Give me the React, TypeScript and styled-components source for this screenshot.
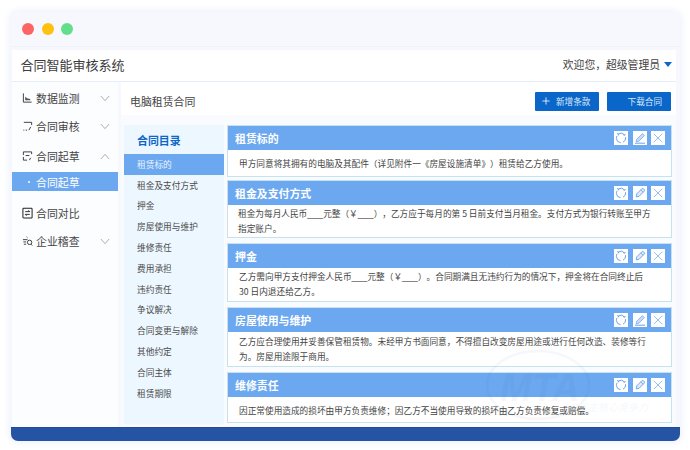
import React from 'react';
import styled, {createGlobalStyle} from 'styled-components';

const GlobalStyle = createGlobalStyle`
  html, body {
    margin: 0;
    padding: 0;
    background: #ffffff;
    font-family: "Noto Sans CJK SC", "Noto Sans", sans-serif;
    color: #444;
    text-spacing-trim: space-all;
  }
  * { box-sizing: border-box; }
`;

const tocItems = ['租赁标的', '租金及支付方式', '押金', '房屋使用与维护', '维修责任', '费用承担', '违约责任', '争议解决', '合同变更与解除', '其他约定', '合同主体', '租赁期限'];

const clauses = [
    {title: '租赁标的', lines: ['甲方同意将其拥有的电脑及其配件（详见附件一《房屋设施清单》）租赁给乙方使用。'], height: 52, gap: 3, inset: 11, pad: 6, pen: 'line'},
    {title: '租金及支付方式', lines: ['租金为每月人民币___元整（￥___），乙方应于每月的第 5 日前支付当月租金。支付方式为银行转账至甲方', '指定账户。'], height: 58, gap: 5, inset: 10, pad: 1, pen: 'solid'},
    {title: '押金', lines: ['乙方需向甲方支付押金人民币___元整（￥___）。合同期满且无违约行为的情况下，押金将在合同终止后', '30 日内退还给乙方。'], height: 59, gap: 5, inset: 11, pad: 1, pen: 'solid'},
    {title: '房屋使用与维护', lines: ['乙方应合理使用并妥善保管租赁物。未经甲方书面同意，不得擅自改变房屋用途或进行任何改造、装修等行', '为。房屋用途限于商用。'], height: 60, gap: 5, inset: 11, pad: 2, pen: 'line'},
    {title: '维修责任', lines: ['因正常使用造成的损坏由甲方负责维修；因乙方不当使用导致的损坏由乙方负责修复或赔偿。'], height: 51, gap: 0, inset: 11, pad: 6, pen: 'solid'},
];

const Chevron: React.FC<{up?: boolean}> = ({up}) => (
    <ChevronSvg viewBox="0 0 12 8">
        <path d={up ? 'M1 7L6 1.5L11 7' : 'M1 1L6 6.5L11 1'} fill="none" stroke="#7f848e" strokeWidth="0.8"/>
    </ChevronSvg>
);

const MonitorIcon = () => (
    <NavSvg viewBox="0 0 12 12">
        <path d="M1.5 1v9.5h9" fill="none" stroke="#333" strokeWidth="1"/>
        <path d="M3.5 8.5V4.5l2.5 2 3 .5v1.5z" fill="#555"/>
    </NavSvg>
);
const ReviewIcon = () => (
    <NavSvg viewBox="0 0 12 12">
        <path d="M2 2h8.5v3M9.5 7l-2 3.5M1.5 10.5h1M4 10.5h1.5" fill="none" stroke="#333" strokeWidth="1"/>
    </NavSvg>
);
const DraftIcon = () => (
    <NavSvg viewBox="0 0 12 12">
        <path d="M1.5 5V1.5h9V4M1.5 7v3.5h4M4 5.5h4M9.5 8l-1.5 2.5" fill="none" stroke="#333" strokeWidth="1"/>
    </NavSvg>
);
const CompareIcon = () => (
    <NavSvg viewBox="0 0 12 12">
        <rect x="1" y="0.8" width="10" height="10.6" rx="0.8" fill="none" stroke="#222" strokeWidth="1.1"/>
        <path d="M3.5 4.5h5L7 3M8.5 7.5h-5L5 9" fill="none" stroke="#222" strokeWidth="1"/>
    </NavSvg>
);
const AuditIcon = () => (
    <NavSvg viewBox="0 0 12 12">
        <path d="M5 1.5l1 1M1 4.5h5M1.5 7h3M2 9.5h2.5" fill="none" stroke="#333" strokeWidth="1"/>
        <circle cx="8.3" cy="7.5" r="2.4" fill="none" stroke="#333" strokeWidth="1"/>
        <path d="M10 9.5l1.2 1.5" stroke="#333" strokeWidth="1"/>
    </NavSvg>
);

const RefreshIcon = () => (
    <ToolSvg viewBox="0 0 14 14">
        <path d="M4.4 3A4.7 4.7 0 0 1 10.6 4M11.6 6.2A4.7 4.7 0 0 1 9 11.2M6.6 11.7A4.7 4.7 0 0 1 2.4 7.6A4.7 4.7 0 0 1 3 5" fill="none" stroke="#5b97e6" strokeWidth="0.9"/>
        <path d="M3 2.6l1.6.4-.5 1.6M11.4 3l-.7 1.3-1.4-.4" fill="none" stroke="#5b97e6" strokeWidth="0.8"/>
    </ToolSvg>
);
const PenLineIcon = () => (
    <ToolSvg viewBox="0 0 14 14">
        <path d="M3.6 8.4L9.4 2.6l2 2-5.8 5.8-2.4.4z" fill="#c8dcf7" stroke="#6ca2ea" strokeWidth="0.7"/>
        <path d="M2 12.2h10" stroke="#5b97e6" strokeWidth="0.9"/>
    </ToolSvg>
);
const PenSolidIcon = () => (
    <ToolSvg viewBox="0 0 14 14">
        <path d="M3.6 8L8.8 2.8a1.2 1.2 0 0 1 1.7 0l.7.7a1.2 1.2 0 0 1 0 1.7L6 10.4l-2.8.4z" fill="#dce9fa" stroke="#5b97e6" strokeWidth="0.8"/>
        <path d="M7.8 3.8l2.4 2.4" stroke="#5b97e6" strokeWidth="0.7"/>
    </ToolSvg>
);
const CloseIcon = () => (
    <ToolSvg viewBox="0 0 14 14">
        <path d="M2.8 2.8l8.4 8.4M11.2 2.8l-8.4 8.4" stroke="#6ca2ea" strokeWidth="0.7"/>
    </ToolSvg>
);

export default function App() {
    return (
        <>
            <GlobalStyle/>
            <Page>
                <Window>
                    <TitleBar>
                        <Dot color="#ff6464"/>
                        <Dot color="#ffc10f"/>
                        <Dot color="#62de8c"/>
                    </TitleBar>
                    <Inner>
                        <Header>
                            <AppName>合同智能审核系统</AppName>
                            <User>欢迎您，超级管理员<Caret/></User>
                        </Header>
                        <Body>
                            <Sidebar>
                                <NavRow><MonitorIcon/><NavLabel>数据监测</NavLabel><Chevron/></NavRow>
                                <NavRow><ReviewIcon/><NavLabel>合同审核</NavLabel><Chevron/></NavRow>
                                <NavRow $top={2}><DraftIcon/><NavLabel>合同起草</NavLabel><Chevron up/></NavRow>
                                <SubRow><SubDot/>合同起草</SubRow>
                                <NavRow $top={8}><CompareIcon/><NavLabel>合同对比</NavLabel></NavRow>
                                <NavRow><AuditIcon/><NavLabel>企业稽查</NavLabel><Chevron/></NavRow>
                            </Sidebar>
                            <Main>
                                <MainHead>
                                    <DocName>电脑租赁合同</DocName>
                                    <HeadButton>
                                        <PlusSvg viewBox="0 0 10 10"><path d="M5 .5v9M.5 5h9" stroke="#fff" strokeWidth="1"/></PlusSvg>
                                        新增条款
                                    </HeadButton>
                                    <HeadButton $shift>下载合同</HeadButton>
                                </MainHead>
                                <Columns>
                                    <Toc>
                                        <TocTitle>合同目录</TocTitle>
                                        {tocItems.map((item, i) => (
                                            <TocItem key={item} $active={i === 0}>{item}</TocItem>
                                        ))}
                                    </Toc>
                                    <Clauses>
                                        {clauses.map(c => (
                                            <Card key={c.title} $height={c.height} $gap={c.gap}>
                                                <CardHead>
                                                    <CardTitle>{c.title}</CardTitle>
                                                    <Tool><RefreshIcon/></Tool>
                                                    <Tool>{c.pen === 'line' ? <PenLineIcon/> : <PenSolidIcon/>}</Tool>
                                                    <Tool><CloseIcon/></Tool>
                                                </CardHead>
                                                <CardBody $inset={c.inset} $pad={c.pad}>
                                                    {c.lines.map(line => (
                                                        <div key={line}>
                                                            {line.split(/(___)/).map((part, i) => (
                                                                part === '___' ? <Blank key={i}>___</Blank> : part
                                                            ))}
                                                        </div>
                                                    ))}
                                                </CardBody>
                                            </Card>
                                        ))}
                                        <Watermark viewBox="0 0 175 73">
                                            <ellipse cx="52" cy="36" rx="51" ry="34" fill="none" stroke="#2554a5" strokeWidth="2.5"/>
                                            <text x="14" y="52" fontFamily="Liberation Sans" fontStyle="italic" fontWeight="700" fontSize="38" fill="#2554a5">MTA</text>
                                            <text x="82" y="62" fontFamily="Noto Sans CJK SC" fontStyle="italic" fontSize="10" fill="#2554a5">专注主核心竞争力</text>
                                        </Watermark>
                                    </Clauses>
                                </Columns>
                            </Main>
                        </Body>
                    </Inner>
                    <Footer/>
                </Window>
            </Page>
        </>
    );
}

const Page = styled.div`
  width: 690px;
  height: 450px;
  padding: 12px 10px 9px 11px;
  overflow: hidden;
`;

const Window = styled.div`
  height: 429px;
  display: flex;
  flex-direction: column;
  background: #f6f8fe;
  border-radius: 7px;
  box-shadow: 0 0 7px 2px #edf2fd;
  overflow: hidden;
`;

const TitleBar = styled.div`
  height: 35px;
  flex: none;
  display: flex;
  align-items: center;
  gap: 7.5px;
  padding: 0 0 0 11px;
  border-bottom: 1px solid #eef1fa;
`;

const Dot = styled.span<{color: string}>`
  width: 12px;
  height: 12px;
  border-radius: 50%;
  background: ${p => p.color};
`;

const Inner = styled.div`
  flex: 1;
  min-height: 0;
  display: flex;
  flex-direction: column;
  margin: 3px 4px 0 1px;
`;

const Header = styled.header`
  height: 32px;
  flex: none;
  display: flex;
  align-items: center;
  justify-content: space-between;
  padding: 0 4px 3px 8.5px;
  background: #ffffff;
  border-bottom: 1px solid #e6eefb;
`;

const AppName = styled.div`
  font-size: 13px;
  color: #3c3c3c;
`;

const User = styled.div`
  display: flex;
  align-items: center;
  font-size: 10.8px;
  color: #444;
`;

const Caret = styled.span`
  margin-left: 4px;
  width: 0;
  height: 0;
  border-left: 4px solid transparent;
  border-right: 4px solid transparent;
  border-top: 5px solid #0a66c8;
`;

const Body = styled.div`
  flex: 1;
  min-height: 0;
  display: flex;
  gap: 3px;
`;

const Sidebar = styled.nav`
  width: 106px;
  flex: none;
  padding-top: 2px;
  background: #fcfdff;
`;

const NavRow = styled.div<{$top?: number}>`
  height: 28px;
  display: flex;
  align-items: center;
  padding: 0 8px 0 10px;
  margin-top: ${p => p.$top ?? 0}px;
  font-size: 10.9px;
  color: #444;
`;

const NavLabel = styled.span`
  flex: 1;
  margin-left: 3px;
`;

const NavSvg = styled.svg`
  width: 11px;
  height: 12px;
  flex: none;
`;

const ChevronSvg = styled.svg`
  width: 10px;
  height: 7px;
  flex: none;
`;

const SubRow = styled.div`
  height: 19px;
  margin-top: 2px;
  display: flex;
  align-items: center;
  padding-left: 16px;
  background: #6ca8ef;
  color: #ffffff;
  font-size: 10.9px;
`;

const SubDot = styled.span`
  width: 2px;
  height: 2px;
  margin-right: 6px;
  border-radius: 50%;
  background: #ffffff;
`;

const Main = styled.main`
  flex: 1;
  min-width: 0;
  display: flex;
  flex-direction: column;
  background: #fafbff;
`;

const MainHead = styled.div`
  height: 33px;
  flex: none;
  display: flex;
  align-items: center;
  gap: 8px;
  margin-bottom: 10px;
  padding: 5px 5px 0 9px;
  background: #ffffff;
`;

const DocName = styled.div`
  flex: 1;
  font-size: 10.9px;
  color: #444;
`;

const HeadButton = styled.button<{$shift?: boolean}>`
  width: 64px;
  height: 19px;
  display: flex;
  align-items: center;
  justify-content: ${p => (p.$shift ? 'flex-end' : 'flex-start')};
  padding: ${p => (p.$shift ? '0 9px 0 0' : '0 0 0 7px')};
  border: none;
  border-radius: 1px;
  background: #0a66c8;
  color: #dbe9fa;
  font-family: inherit;
  font-size: 8.6px;
`;

const PlusSvg = styled.svg`
  width: 8px;
  height: 8px;
  margin-right: 6px;
`;

const Columns = styled.div`
  flex: 1;
  min-height: 0;
  display: flex;
  gap: 3px;
  padding: 0 0 2px 3px;
`;

const Toc = styled.aside`
  width: 100px;
  flex: none;
  background: #edf7ff;
  border-bottom: 1px solid #f5f8fe;
`;

const TocTitle = styled.div`
  height: 29px;
  display: flex;
  align-items: center;
  padding-left: 13px;
  font-size: 10.9px;
  font-weight: 700;
  color: #0a66c8;
`;

const TocItem = styled.div<{$active?: boolean}>`
  height: 20.8px;
  display: flex;
  align-items: center;
  padding-left: 13px;
  font-size: 8.7px;
  color: ${p => (p.$active ? '#eaf3fe' : '#4a4a4a')};
  background: ${p => (p.$active ? '#6ca8ef' : 'transparent')};
`;

const Clauses = styled.section`
  position: relative;
  width: 445px;
  flex: none;
  display: flex;
  flex-direction: column;
`;

const Card = styled.article<{$height: number; $gap: number}>`
  height: ${p => p.$height}px;
  flex: none;
  margin-bottom: ${p => p.$gap}px;
  background: #ffffff;
  border: 1px solid #c5e3ee;
`;

const CardHead = styled.div`
  height: 23.5px;
  display: flex;
  align-items: center;
  gap: 4.5px;
  padding-right: 6px;
  background: #6ca8ef;
`;

const CardTitle = styled.h3`
  flex: 1;
  margin: 0;
  padding-left: 7px;
  font-size: 10.9px;
  font-weight: 700;
  color: #ffffff;
`;

const Tool = styled.span`
  width: 14px;
  height: 14px;
  flex: none;
  display: flex;
  background: #ffffff;
`;

const ToolSvg = styled.svg`
  width: 14px;
  height: 14px;
`;

const CardBody = styled.div<{$inset: number; $pad: number}>`
  padding: ${p => p.$pad}px 6px 0 ${p => p.$inset}px;
  font-size: 8.67px;
  line-height: 15.5px;
  color: #444;
  white-space: nowrap;
`;

const Blank = styled.span`
  font-family: "Liberation Sans", sans-serif;
  font-size: 9.5px;
`;

const Watermark = styled.svg`
  position: absolute;
  right: 11px;
  bottom: 3px;
  width: 175px;
  height: 73px;
  opacity: 0.04;
  pointer-events: none;
`;

const Footer = styled.footer`
  height: 14px;
  flex: none;
  background: #2554a5;
  border-top: 1px solid #1f4b98;
`;
